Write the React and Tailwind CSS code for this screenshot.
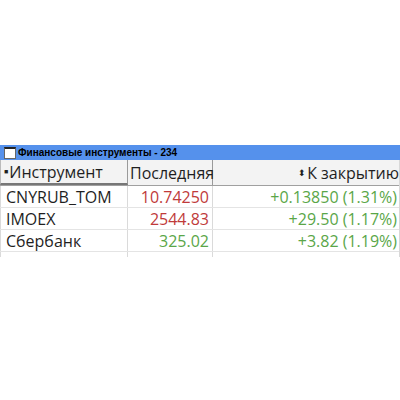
import React from 'react';

const rows = [
  { name: 'CNYRUB_TOM', last: '10.74250', lastColor: 'text-[#c03a3a]', change: '+0.13850 (1.31%)' },
  { name: 'IMOEX', last: '2544.83', lastColor: 'text-[#c03a3a]', change: '+29.50 (1.17%)' },
  { name: 'Сбербанк', last: '325.02', lastColor: 'text-[#5aa648]', change: '+3.82 (1.19%)' },
];

function WindowIcon() {
  return (
    <div className="w-[12px] h-[12px] bg-white border border-[#666] border-t-[2px] border-t-[#222] shrink-0" />
  );
}

export default function App() {
  return (
    <div className="w-[400px] h-[400px] bg-white overflow-hidden">
      <div className="mt-[145px] w-[400px]">
        {/* title bar */}
        <div className="h-[15px] bg-[#5591ec] flex items-center pl-[4px] gap-[2px]">
          <WindowIcon />
          <span className="text-[10px] font-bold text-black leading-none font-['Liberation_Sans',sans-serif]">
            Финансовые инструменты - 234
          </span>
        </div>

        {/* table */}
        <div className="font-['Open_Sans',sans-serif] text-[16px] text-[#1f1f1f] border-r border-[#d8d8d8]">
          <div className="grid grid-cols-[128px_85px_1fr] h-[26px] bg-[#f3f3f3] border-b border-[#a0a0a0] leading-none">
            <div className="flex items-center border-l border-[#bbb] border-r border-r-[#9a9a9a] border-b-[2px] border-b-[#777] pl-[3px]">
              <span className="text-[7px] mr-[1px]">■</span>
              <span>Инструмент</span>
            </div>
            <div className="flex items-center border-r border-[#9a9a9a] pl-[2px]">Последняя</div>
            <div className="flex items-center justify-end overflow-hidden whitespace-nowrap">
              <span className="text-[9px] mr-[1px]">⬍</span>
              <span>К закрытию</span>
            </div>
          </div>
          {rows.map((r) => (
            <div key={r.name} className="grid grid-cols-[128px_85px_1fr] h-[22px] border-b border-[#e4e4e4] leading-none">
              <div className="flex items-center border-l border-r border-[#dadada] pl-[5px]">{r.name}</div>
              <div className={`flex items-center justify-end border-r border-[#dadada] pr-[3px] ${r.lastColor}`}>{r.last}</div>
              <div className="flex items-center justify-end pr-[2px] text-[#5aa648]">{r.change}</div>
            </div>
          ))}
          <div className="grid grid-cols-[128px_85px_1fr] h-[5px]">
            <div className="border-l border-r border-[#dadada]" />
            <div className="border-r border-[#dadada]" />
            <div />
          </div>
        </div>
      </div>
    </div>
  );
}
